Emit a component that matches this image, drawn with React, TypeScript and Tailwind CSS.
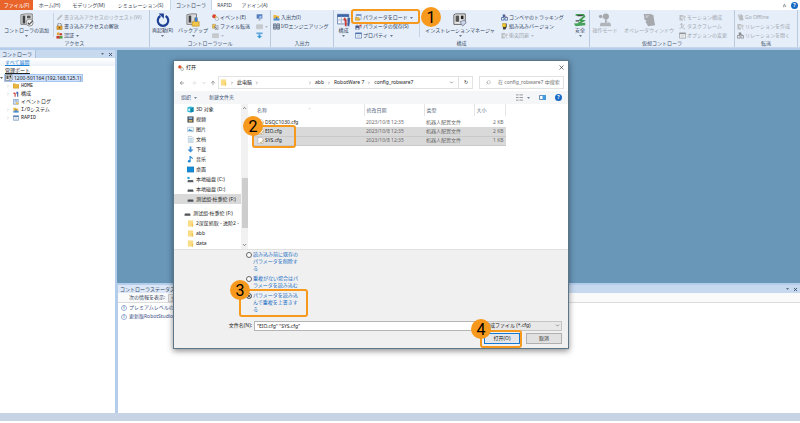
import { FC, ReactNode } from 'react';
import {
  FiArrowLeft,
  FiArrowRight,
  FiArrowUp,
  FiChevronDown,
  FiChevronRight,
  FiChevronsUp,
  FiChevronUp,
  FiSearch,
  FiX,
} from 'react-icons/fi';

type IconName =
  | 'cabinet' | 'restart' | 'backup' | 'config' | 'manager' | 'safety' | 'joystick' | 'operator'
  | 'pencil' | 'lock' | 'people' | 'event' | 'transfer' | 'screen' | 'box' | 'down' | 'io' | 'eng'
  | 'load' | 'save' | 'list' | 'track' | 'embed' | 'robot' | 'axes';

const Icon: FC<{ name: IconName; className?: string }> = ({ name, className = 'w-[7px] h-[7px]' }) => (
  <svg viewBox="0 0 16 16" className={`shrink-0 ${className}`} fill="none" aria-hidden="true">
    {name === 'cabinet' && (
      <>
        <path d="M1 2l5-1h8v9l-4 3H1z" fill="#d9dadb" stroke="#777" />
        <path d="M3 3h3v9H3z" fill="#3f4245" />
        <path d="M8 3h4v3H8z" fill="#555" />
        <circle cx="11" cy="11" r="4" fill="#eee" stroke="#888" />
        <path d="M9 11l1.5 2 4-4" stroke="#555" strokeWidth="1.5" />
      </>
    )}
    {name === 'restart' && (
      <>
        <path d="M5 3.500A6 6 0 1 0 11 3.500" stroke="#1c3f93" strokeWidth="2.5" />
        <path d="M3 .5h6v6z" fill="#1c3f93" />
      </>
    )}
    {name === 'backup' && (
      <>
        <path d="M1 2l5-1h6v9l-3 3H1z" fill="#d9dadb" stroke="#777" />
        <path d="M3 3h3v8H3z" fill="#3f4245" />
        <path d="M7 10h2l1-4h3v4h2v5H7z" fill="#f3c64a" stroke="#b88a1a" strokeWidth=".7" />
        <path d="M10 5h3v5h-3z" fill="#3d7ad0" />
      </>
    )}
    {name === 'config' && (
      <>
        <path d="M.5 1.500h13v11H.5z" fill="#eef2f8" stroke="#6b83ab" />
        <path d="M.5 1.500h13v3H.5z" fill="#3c64a8" />
        <path d="M1 8h12M5 4v8M9 4v8" stroke="#a9b8d0" />
        <path d="M7 7l2-2 2 3v7H9V9z" fill="#cb3b35" />
        <path d="M12 5l3 1-1 9h-2z" fill="#3f5e9c" />
      </>
    )}
    {name === 'manager' && (
      <>
        <path d="M1 2l2-1h11v11l-2 1H1z" fill="#e8e8e8" stroke="#555" />
        <path d="M3 3h4v7H3z" fill="#555" />
        <path d="M9 3h3v4H9z" fill="#222" />
        <path d="M8 10l5-2 2 3-4 4z" fill="#c9d3e5" stroke="#7c8799" />
      </>
    )}
    {name === 'safety' && (
      <>
        <path d="M3 2h9l1 2-5 4 4 1-6 3" stroke="#3f9c52" strokeWidth="2" />
        <path d="M5 3h6M3 9h4" stroke="#444" strokeWidth="1.3" />
        <path d="M1 12l13-1v3L3 15z" fill="#47a35c" />
      </>
    )}
    {name === 'joystick' && (
      <>
        <circle cx="9" cy="4" r="3.5" fill="#a5a9ae" />
        <circle cx="3" cy="4" r="2" fill="#a5a9ae" />
        <path d="M8 6h2v5H8z" fill="#a5a9ae" />
        <path d="M3 11h11l1 4H2z" fill="#b0b4b9" />
        <path d="M5 5l8 6" stroke="#c8ccd1" />
      </>
    )}
    {name === 'operator' && (
      <>
        <path d="M2 1h9l1 7H3z" fill="#a5a9ae" />
        <path d="M4 2.500h5v3H4z" fill="#c3c7cb" />
        <path d="M8 3l5-1 1 7 1 5-8 1-3-5z" fill="#a5a9ae" />
      </>
    )}
    {name === 'pencil' && <path d="M2 14l1-4 9-9 3 3-9 9z" fill="#a9adb3" />}
    {name === 'lock' && (
      <>
        <path d="M4 8V4a4 4 0 0 1 8 0v4" stroke="#777" strokeWidth="2" />
        <path d="M2 7h12v8H2z" fill="#eba92f" stroke="#9a6a16" />
        <path d="M6 9h4v4H6z" fill="#8a5a14" />
      </>
    )}
    {name === 'people' && (
      <>
        <circle cx="5" cy="4" r="3.5" fill="#e3a63c" />
        <circle cx="11" cy="5" r="3" fill="#cf4433" />
        <path d="M1 9h8v6H1z" fill="#c93a2b" />
        <path d="M8 9h7v6H8z" fill="#5da043" />
      </>
    )}
    {name === 'event' && (
      <>
        <circle cx="5" cy="5" r="4.5" fill="#d9452f" />
        <path d="M7 4l6 3-5 6z" fill="#f3bf33" />
        <circle cx="11" cy="11" r="4" fill="#eee" stroke="#7a8596" />
      </>
    )}
    {name === 'transfer' && (
      <>
        <path d="M1 3h7v9H1z" fill="#f2c85b" stroke="#a87f28" />
        <path d="M7 6h7v9H7z" fill="#d4d9e2" stroke="#6c7788" />
        <path d="M4 8l8 5" stroke="#555" strokeWidth="1.5" />
      </>
    )}
    {name === 'screen' && (
      <>
        <path d="M2 1h12v9H2z" fill="#4f80c8" stroke="#6c7ca0" />
        <path d="M6 10h4v5H6z" fill="#9aa8c0" />
        <circle cx="10" cy="7" r="3" fill="#9dc0ee" />
      </>
    )}
    {name === 'box' && <path d="M1 4h14v9H1z" fill="#b7bbc1" stroke="#9da2a9" />}
    {name === 'down' && (
      <>
        <path d="M1 1h14v4H1z" fill="#67a8dc" />
        <path d="M6 5h4v4h4l-6 6-6-6h4z" fill="#3f9ad8" />
      </>
    )}
    {name === 'io' && (
      <>
        <path d="M1 2h6l1 2h6v6H1z" fill="#efb93c" />
        <path d="M1 10h14v5H1z" fill="#4f8fcf" />
        <path d="M6 6l5 2-4 4z" fill="#3b6aad" />
      </>
    )}
    {name === 'eng' && (
      <>
        <path d="M1 2h6v12H1zM9 2h6v12H9z" stroke="#44556e" strokeWidth="1.5" />
        <path d="M0 6h16M0 10h16M4 2v12M12 2v12" stroke="#44556e" />
      </>
    )}
    {name === 'load' && (
      <>
        <path d="M3 1h11v11H3z" fill="#eef3fb" stroke="#5878ae" />
        <path d="M3 1h11v3H3z" fill="#5c82c0" />
        <path d="M1 8h8l2 6H1z" fill="#f0bd48" stroke="#a97d20" />
      </>
    )}
    {name === 'save' && (
      <>
        <path d="M5 1h10v10H5z" fill="#eef3fb" stroke="#5878ae" />
        <path d="M1 6h9v9H1z" fill="#3d4f82" />
        <path d="M3 11h5v4H3z" fill="#dfe5f1" />
        <path d="M10 4h4v4h-4z" fill="#c93a2b" />
      </>
    )}
    {name === 'list' && (
      <>
        <path d="M1 2h14v12H1z" fill="#f6f9fd" stroke="#4f74ae" strokeWidth="1.5" />
        <path d="M1 2h14v3H1z" fill="#4f74ae" />
        <path d="M4 8h8M4 11h8" stroke="#8ea4c6" />
      </>
    )}
    {name === 'track' && (
      <>
        <path d="M4 1h5v6H4z" fill="#44639c" />
        <path d="M1 8h6v6H1zM9 8h6v6H9z" stroke="#44639c" strokeWidth="1.8" />
        <path d="M8 3l5 4" stroke="#8a4a60" strokeWidth="2" />
      </>
    )}
    {name === 'embed' && (
      <>
        <path d="M3 1h10v8l-3 6H5z" fill="#3f3f3c" />
        <path d="M3 1h8v8H3z" fill="#f0c42d" />
      </>
    )}
    {name === 'robot' && (
      <>
        <path d="M1 2h8v4H5v4h4v5H1z" fill="#a9aeb5" />
        <path d="M8 5h6v3h-4l4 7" stroke="#a9aeb5" strokeWidth="2" />
      </>
    )}
    {name === 'axes' && (
      <path d="M6 1v9l-5 3M6 10l8 4M2 4l4-3 3 3M12 4l-5 6" stroke="#9ca2aa" strokeWidth="2" />
    )}
  </svg>
);

const Caret: FC<{ className?: string }> = ({ className = '' }) => (
  <svg viewBox="0 0 6 4" className={`w-[3px] h-[2px] shrink-0 opacity-70 ${className}`} aria-hidden="true">
    <path d="M0 0h6L3 4z" fill="currentColor" />
  </svg>
);

interface BigButtonProps {
  icon: IconName;
  label: string;
  className: string;
  disabled?: boolean;
  caret?: boolean;
}

const BigButton: FC<BigButtonProps> = ({ icon, label, className, disabled, caret = true }) => (
  <button
    disabled={disabled}
    className={`flex flex-col items-center shrink-0 whitespace-nowrap disabled:text-[#a3a8b0] ${className}`}
  >
    <Icon name={icon} className="w-[14px] h-[14px]" />
    <span className="leading-[7px]">{label}</span>
    {caret && <Caret className="mt-[1px]" />}
  </button>
);

interface SmallButton {
  icon: IconName;
  label?: string;
  disabled?: boolean;
  caret?: boolean;
}

const SmallColumn: FC<{ items: SmallButton[]; className: string }> = ({ items, className }) => (
  <div className={`flex flex-col shrink-0 ${className}`}>
    {items.map(({ icon, label, disabled, caret }) => (
      <button
        key={icon + label}
        disabled={disabled}
        aria-label={label ?? icon}
        className="flex items-center gap-[1px] h-[9px] whitespace-nowrap disabled:text-[#a3a8b0]"
      >
        <Icon name={icon} className={`w-[7px] h-[7px] ${disabled ? 'grayscale opacity-70' : ''}`} />
        {label}
        {caret && <Caret className="ml-[1px]" />}
      </button>
    ))}
  </div>
);

const Group: FC<{ title: string; className: string; children: ReactNode }> = ({ title, className, children }) => (
  <section className={`flex flex-col shrink-0 border-r border-[#b9c9de] ${className}`}>
    <div className="flex h-[30px] pt-[3px]">{children}</div>
    <h2 className="text-center leading-[7px] text-[#44546c]">{title}</h2>
  </section>
);

const Divider = () => <div className="w-px h-[24px] bg-[#c6d3e4] shrink-0" />;

const Ribbon = () => (
  <div className="flex h-[38px] bg-[#e5eef9] border-b border-[#c5d6ea] overflow-hidden">
    <Group title="アクセス" className="w-[150px]">
      <BigButton icon="cabinet" label="コントローラの追加" className="w-[53px]" />
      <Divider />
      <SmallColumn
        className="pl-[2px]"
        items={[
          { icon: 'pencil', label: '書き込みアクセスのリクエスト(W)', disabled: true },
          { icon: 'lock', label: '書き込みアクセスの解放' },
          { icon: 'people', label: '認証', caret: true },
        ]}
      />
    </Group>
    <Group title="コントローラツール" className="w-[121px]">
      <BigButton icon="restart" label="再起動(R)" className="w-[25px]" />
      <BigButton icon="backup" label="バックアップ" className="w-[36px]" />
      <SmallColumn
        className="w-[45px] pl-[1px]"
        items={[
          { icon: 'event', label: 'イベント(E)' },
          { icon: 'transfer', label: 'ファイル転送' },
          { icon: 'box', caret: true, disabled: true },
        ]}
      />
      <SmallColumn
        className=""
        items={[{ icon: 'screen' }, { icon: 'box', caret: true, disabled: true }, { icon: 'down' }]}
      />
    </Group>
    <Group title="入出力" className="w-[63px]">
      <SmallColumn
        className="pl-[2px]"
        items={[
          { icon: 'io', label: '入出力(I)' },
          { icon: 'eng', label: 'I/Oエンジニアリング' },
        ]}
      />
    </Group>
    <Group title="構成" className="w-[256px]">
      <BigButton icon="config" label="構成" className="w-[19px]" />
      <SmallColumn
        className="w-[66px] pl-[2px]"
        items={[
          { icon: 'load', label: 'パラメータをロード', caret: true },
          { icon: 'save', label: 'パラメータの保存(S)' },
          { icon: 'list', label: 'プロパティ', caret: true },
        ]}
      />
      <Divider />
      <BigButton icon="manager" label="インストレーションマネージャ" className="w-[80px]" />
      <SmallColumn
        className="w-[73px] pl-[1px]"
        items={[
          { icon: 'track', label: 'コンベヤのトラッキング' },
          { icon: 'embed', label: '組み込みバージョン' },
          { icon: 'robot', label: '衝突回避', caret: true, disabled: true },
        ]}
      />
      <BigButton icon="safety" label="安全" className="w-[14px]" />
    </Group>
    <Group title="仮想コントローラ" className="w-[145px]">
      <BigButton icon="joystick" label="操作モード" className="w-[30px]" disabled caret={false} />
      <BigButton icon="operator" label="オペレータウィンドウ" className="w-[58px]" disabled caret={false} />
      <SmallColumn
        className="pl-[1px]"
        items={[
          { icon: 'robot', label: 'モーション構成', disabled: true },
          { icon: 'axes', label: 'タスクフレーム', disabled: true },
          { icon: 'list', label: 'オプションの変更', disabled: true },
        ]}
      />
    </Group>
    <Group title="転送" className="w-[63px]">
      <SmallColumn
        className="pl-[2px]"
        items={[
          { icon: 'operator', label: 'Go Offline', disabled: true },
          { icon: 'robot', label: 'リレーションを作成', disabled: true },
          { icon: 'track', label: 'リレーションを開く', disabled: true },
        ]}
      />
    </Group>
  </div>
);

const HelpBadge = () => (
  <button className="flex items-center justify-center w-[7px] h-[7px] rounded-full bg-[#1769c4] text-white font-bold leading-[7px]">
    ?
  </button>
);

const MenuTabs = () => (
  <nav className="flex h-[10px] bg-white text-[#3c4654] whitespace-nowrap">
    <button className="w-[33px] bg-[#e8642b] text-white">ファイル(F)</button>
    <button className="w-[33px]">ホーム(H)</button>
    <button className="w-[45px]">モデリング(M)</button>
    <button className="w-[59px]">シミュレーション(S)</button>
    <button className="w-[42px] bg-[#e5eef9] border-x border-[#c5d6ea]">コントローラ</button>
    <button className="w-[25px]">RAPID</button>
    <button className="w-[35px]">アドイン(A)</button>
    <div className="flex items-center gap-[4px] ml-auto pr-[2px]">
      <FiChevronsUp className="w-[5px] h-[5px]" strokeWidth={3} />
      <HelpBadge />
    </div>
  </nav>
);

const PanelHeader: FC<{ title: string }> = ({ title }) => (
  <div className="flex items-center h-[8px] bg-[#c7d9ef] text-[#33465f] whitespace-nowrap">
    <h2 className="h-full leading-[8px] pl-[2px] pr-[3px] bg-[#dbe7f6] border-r border-[#a9bfdd]">{title}</h2>
    <Caret className="ml-auto mr-[4px]" />
    <FiX className="w-[5px] h-[5px] mr-[2px]" strokeWidth={4} />
  </div>
);

const TREE = [
  { label: 'HOME', kind: 'folder', open: true },
  { label: '構成', kind: 'tools', open: true },
  { label: 'イベントログ', kind: 'log', open: false },
  { label: 'I/Oシステム', kind: 'io', open: true },
  { label: 'RAPID', kind: 'rapid', open: true },
];

const TreeIcon: FC<{ kind: string }> = ({ kind }) => {
  if (kind === 'io') return <Icon name="io" className="w-[6px] h-[6px]" />;
  if (kind === 'rapid') return <Icon name="list" className="w-[6px] h-[6px]" />;
  return (
    <svg viewBox="0 0 16 16" className="w-[6px] h-[6px] shrink-0" fill="none" aria-hidden="true">
      {kind === 'folder' && <path d="M0 2h6l2 2h8v10H0z" fill="#e8b73c" stroke="#b98a1e" />}
      {kind === 'tools' && (
        <>
          <path d="M2 3l5 2v10H4V8L1 7z" fill="#d03c35" />
          <path d="M9 2h5v13h-3V8L9 7z" fill="#4166ac" />
        </>
      )}
      {kind === 'log' && (
        <>
          <path d="M1 1h13v13H1z" fill="#cfe0f5" stroke="#6080b4" strokeWidth="1.5" />
          <path d="M5 4h6M5 7h6" stroke="#6080b4" />
          <path d="M8 9h6v5H8z" fill="#f0c14c" />
        </>
      )}
    </svg>
  );
};

const ControllerPanel = () => (
  <aside className="flex flex-col w-[117px] shrink-0 bg-white border-r-2 border-[#b4cdeb]">
    <PanelHeader title="コントローラ" />
    <div className="flex h-[8px] pl-[5px] bg-linear-to-b from-white to-[#edf2f8]">
      <a href="#expand" className="leading-[8px] text-[#1b80d3] underline">すべて展開</a>
    </div>
    <ul className="leading-[8px] text-[#222] whitespace-nowrap">
      <li className="pl-[5px] underline">管理ポート</li>
      <li className="flex items-center">
        <span className="w-[4px] flex"><Caret /></span>
        <span className="flex items-center h-[8px] pr-[1px] bg-[#d0e1fb] border border-[#a8c6f2]">
          <Icon name="manager" className="w-[8px] h-[8px]" />
          <span className="pl-[1px]">1200-501164 (192.168.125.1)</span>
        </span>
      </li>
      {TREE.map(({ label, kind, open }) => (
        <li key={label} className="flex items-center pl-[6px] font-[Liberation_Mono,Noto_Sans_CJK_JP,monospace]">
          <span className="w-[7px] text-[#999]">{open && <FiChevronRight className="w-[4px] h-[4px]" />}</span>
          <TreeIcon kind={kind} />
          <span className="pl-[2px]">{label}</span>
        </li>
      ))}
    </ul>
  </aside>
);

const StatusPanel = () => (
  <section className="flex flex-col h-[130px] bg-white border-t-2 border-l border-[#b4cdeb]">
    <PanelHeader title="コントローラステータス" />
    <div className="flex items-center h-[10px] pl-[11px] gap-[3px] border-b border-[#dcdcdc] bg-[#fafafa]">
      <label htmlFor="filter">次の情報を表示:</label>
      <select id="filter" className="appearance-none w-[60px] h-[8px] px-[2px] border border-[#ccc] bg-[#eee]">
        <option>全情報</option>
      </select>
    </div>
    <ul className="pl-[3px] text-[#3c4f86] whitespace-nowrap">
      {['プレミアムレベルの', '更新版RobotStudio'].map((text) => (
        <li key={text} className="flex items-center gap-[2px] h-[9px]">
          <span className="flex items-center justify-center w-[6px] h-[6px] rounded-full border border-[#9db3d8] leading-[5px]">
            i
          </span>
          {text}
        </li>
      ))}
    </ul>
  </section>
);

const PLACES = [
  { label: '3D 对象', kind: 'cube' },
  { label: '视频', kind: 'video' },
  { label: '图片', kind: 'picture' },
  { label: '文档', kind: 'doc' },
  { label: '下载', kind: 'download' },
  { label: '音乐', kind: 'music' },
  { label: '桌面', kind: 'desktop' },
  { label: '本地磁盘 (C:)', kind: 'system' },
  { label: '本地磁盘 (D:)', kind: 'drive' },
  { label: '测试组-杜秉伦 (F:)', kind: 'drive' },
];

const PlaceIcon: FC<{ kind: string }> = ({ kind }) => (
  <svg viewBox="0 0 16 16" className="w-[7px] h-[7px] shrink-0" fill="none" aria-hidden="true">
    {kind === 'cube' && (
      <>
        <path d="M1 3l7-2 7 2v10l-7 2-7-2z" fill="#35b5d6" />
        <path d="M8 6l7-3v10l-7 2z" fill="#1585a8" />
        <path d="M3 6h4v5H3z" fill="#d6f3fa" />
      </>
    )}
    {kind === 'video' && (
      <>
        <path d="M1 1h14v14H1z" fill="#4a5058" />
        <path d="M4 3h8v4H4z" fill="#83b5e6" />
        <path d="M4 9h8v4H4z" fill="#d0b869" />
      </>
    )}
    {kind === 'picture' && (
      <>
        <path d="M1 3h14v10H1z" fill="#e9f5fd" stroke="#8fa9be" />
        <path d="M2 11l4-4 3 3 2-1 3 3z" fill="#2f84c7" />
      </>
    )}
    {kind === 'doc' && (
      <>
        <path d="M3 1h8l3 3v11H3z" fill="#f5f9fc" stroke="#8ca5b8" />
        <path d="M5 6h7M5 9h7M5 12h7" stroke="#5f9cc9" />
      </>
    )}
    {kind === 'download' && <path d="M6 1h4v7h5l-7 7-7-7h5z" fill="#3c8fd6" />}
    {kind === 'music' && (
      <>
        <path d="M7 12V1l6 5" stroke="#1f86d2" strokeWidth="2.5" />
        <circle cx="5" cy="12" r="3" fill="#1f86d2" />
      </>
    )}
    {kind === 'desktop' && <path d="M0 2h16v12H0z" fill="#158bd6" stroke="#0b6cae" />}
    {kind === 'system' && (
      <>
        <path d="M1 2h5v5H1z" fill="#26a3e2" />
        <path d="M2 9h12l1 5H1z" fill="#5c6268" />
      </>
    )}
    {kind === 'drive' && <path d="M2 8h12l1 5H1z" fill="#4e5358" />}
    {kind === 'folder' && (
      <>
        <path d="M2 1h12v14H2z" fill="#f9dc83" />
        <path d="M11 8h3v7h-3z" fill="#eec457" />
      </>
    )}
  </svg>
);

const PlacesPane = () => (
  <nav className="flex w-[74px] shrink-0 whitespace-nowrap">
    <ul className="w-[67px] overflow-hidden">
      {PLACES.map(({ label, kind }, i) => (
        <li key={label} className={`flex items-center h-[10px] pl-[13px] gap-[2px] ${i === 9 ? 'bg-[#d9d9d9]' : ''}`}>
          <PlaceIcon kind={kind} />
          {label}
        </li>
      ))}
      <li className="flex items-center h-[10px] mt-[4px] pl-[10px] gap-[2px]">
        <PlaceIcon kind="drive" />
        测试组-杜秉伦 (F:)
      </li>
      {['2深筐抓取 - 进阶2 -', 'abb', 'data'].map((label) => (
        <li key={label} className="flex items-center h-[10px] pl-[13px] gap-[2px]">
          <PlaceIcon kind="folder" />
          {label}
        </li>
      ))}
    </ul>
    <div className="flex flex-col items-center w-[7px] bg-[#f1f1f1] text-[#444]">
      <FiChevronUp className="w-[5px] h-[8px]" strokeWidth={3} />
      <div className="w-[6px] h-[50px] mt-auto bg-[#cdcdcd]" />
      <FiChevronDown className="w-[5px] h-[8px] mt-[13px]" strokeWidth={3} />
    </div>
  </nav>
);

const FILES = [
  { name: 'DSQC1030.cfg', size: '2 KB', selected: false },
  { name: 'EIO.cfg', size: '2 KB', selected: true },
  { name: 'SYS.cfg', size: '1 KB', selected: true },
];

const FileList = () => (
  <div className="flex-1 pl-[6px]">
    <table className="table-fixed w-[252px] text-left whitespace-nowrap text-[#6b6b6b]">
      <thead className="text-[#56677d]">
        <tr className="h-[12px]">
          <th className="w-[110px] font-normal pl-[3px] border-r border-[#e5e5e5]">
            <div className="flex items-start h-[7px]">
              名称
              <FiChevronUp className="w-[5px] h-[3px] ml-[40px]" />
            </div>
          </th>
          <th className="w-[60px] font-normal pl-[2px] border-r border-[#e5e5e5]">修改日期</th>
          <th className="w-[50px] font-normal pl-[2px] border-r border-[#e5e5e5]">类型</th>
          <th className="font-normal pl-[2px] border-r border-[#e5e5e5]">大小</th>
        </tr>
      </thead>
      <tbody>
        <tr className="h-[2px]" />
        {FILES.map(({ name, size, selected }) => (
          <tr key={name} className={`h-[9px] ${selected ? 'bg-[#d9d9d9] border-b border-[#c9c9c9]' : ''}`}>
            <td className="pl-[3px] text-[#222]">
              <div className="flex items-center gap-[1px]">
                <svg viewBox="0 0 16 16" className="w-[7px] h-[7px]" aria-hidden="true">
                  <path d="M2 1h8l4 4v10H2z" fill="#fff" stroke="#999" />
                  <path d="M6 11l3 3 6-8" fill="none" stroke="#c8a45a" strokeWidth="2" />
                </svg>
                {name}
              </div>
            </td>
            <td className="pl-[2px]">2023/10/8 12:35</td>
            <td className="pl-[2px]">机器人配置文件</td>
            <td className="pr-[2px] text-right">{size}</td>
          </tr>
        ))}
      </tbody>
    </table>
  </div>
);

const MODES = [
  '読み込み前に既存のパラメータを削除する',
  '重複がない場合はパラメータを読み込む',
  'パラメータを読み込んで重複を上書きする',
];

const Crumb: FC<{ children?: ReactNode; className?: string }> = ({ children, className = '' }) => (
  <span className={`flex items-center ${className}`}>
    {children}
    <FiChevronRight className="w-[4px] h-[4px] mx-[3px]" />
  </span>
);

const OpenDialog = () => (
  <div
    role="dialog"
    aria-label="打开"
    className="absolute left-[173px] top-[60px] w-[396px] bg-white border border-[#5c7688] shadow-[0_2px_6px_rgba(0,0,0,0.45)] text-[#222] font-[Noto_Sans,Noto_Sans_CJK_SC,sans-serif]"
  >
    <div className="flex items-center h-[13px] pl-[4px] pr-[3px]">
      <Icon name="event" className="w-[6px] h-[6px]" />
      <h1 className="pl-[2px]">打开</h1>
      <button aria-label="close" className="ml-auto"><FiX className="w-[7px] h-[7px]" /></button>
    </div>

    <div className="flex items-center h-[17px] pl-[5px] pr-[4px] whitespace-nowrap">
      <FiArrowLeft className="w-[6px] h-[6px] text-[#555]" />
      <FiArrowRight className="w-[6px] h-[6px] ml-[6px] text-[#ccc]" />
      <FiChevronDown className="w-[4px] h-[4px] ml-[5px] text-[#777]" />
      <FiArrowUp className="w-[6px] h-[6px] ml-[4px] mr-[2px] text-[#555]" />
      <div className="flex items-center w-[255px] h-[13px] pl-[1px] border border-[#e2e2e2]">
        <PlaceIcon kind="folder" />
        <Crumb />
        <Crumb className="w-[67px]">此电脑</Crumb>
        <Crumb className="pl-[1px]" />
        <Crumb>abb</Crumb>
        <Crumb>RobotWare 7</Crumb>
        config_robware7
        <FiChevronDown className="w-[5px] h-[5px] ml-auto mr-[4px]" />
        <button aria-label="refresh" className="w-[14px] h-full border-l border-[#e2e2e2]">↻</button>
      </div>
      <div className="flex items-center flex-1 h-[13px] ml-[6px] pl-[6px] gap-[7px] border border-[#e2e2e2]">
        <FiSearch className="w-[5px] h-[5px] text-[#888] shrink-0 -scale-x-100" />
        <input
          aria-label="search"
          placeholder="在 config_robware7 中搜索"
          className="w-full min-w-0 placeholder:text-[#6e6e6e]"
        />
      </div>
    </div>

    <div className="flex items-center h-[13px] pl-[7px] pr-[6px] bg-[#f5f6f8] text-[#3d5577]">
      <button className="flex items-center gap-[3px]">组织 <Caret /></button>
      <button className="ml-[12px]">新建文件夹</button>
      <svg viewBox="0 0 8 8" className="w-[7px] h-[7px] ml-auto" aria-hidden="true">
        <path d="M0 1h3M0 4h3M0 7h3M4 1h4M4 4h4M4 7h4" stroke="#8a8f96" />
      </svg>
      <Caret className="ml-[4px]" />
      <svg viewBox="0 0 8 6" className="w-[7px] h-[5px] ml-[9px] mr-[9px]" aria-hidden="true">
        <path d="M.5.5h7v5h-7z" fill="#fff" stroke="#456f9d" />
        <path d="M4 0h4v6H4z" fill="#419be0" />
      </svg>
      <HelpBadge />
    </div>

    <div className="flex h-[145px]">
      <PlacesPane />
      <FileList />
    </div>

    <div className="bg-[#f0f0f0] pb-[4px] pr-[6px] border-t border-[#e0e0e0]">
      <fieldset className="flex flex-col gap-[3px] pt-[1px] pl-[72px] text-[#1a6fc4] font-[Noto_Sans,Noto_Sans_CJK_JP,sans-serif]">
        {MODES.map((mode, i) => (
          <label key={mode} className="flex gap-[1px] w-[53px] leading-[7px]">
            <input
              type="radio"
              name="mode"
              defaultChecked={i === 2}
              className="appearance-none w-[6px] h-[6px] mt-[1px] shrink-0 rounded-full border border-[#666] bg-white checked:bg-[#222] checked:shadow-[inset_0_0_0_1px_white]"
            />
            <span className="w-[46px] break-all">{mode}</span>
          </label>
        ))}
      </fieldset>
      <div className="flex items-center h-[11px] mt-[7px] whitespace-nowrap">
        <label htmlFor="filename" className="w-[78px] text-right">文件名(N):</label>
        <input
          id="filename"
          defaultValue={'"EIO.cfg" "SYS.cfg"'}
          className="flex-1 min-w-0 h-[10px] ml-[2px] px-[2px] bg-white border border-[#b5b5b5]"
        />
        <div className="grid items-center w-[80px] ml-[4px]">
          <select aria-label="type" className="col-start-1 row-start-1 appearance-none h-[10px] pl-[2px] bg-[#e8e8e8] border border-[#c4c4c4]">
            <option>構成ファイル (*.cfg)</option>
          </select>
          <FiChevronDown className="col-start-1 row-start-1 justify-self-end w-[5px] h-[5px] mr-[2px] pointer-events-none" />
        </div>
      </div>
      <div className="flex justify-end gap-[6px] mt-[2px]">
        <button className="w-[36px] h-[11px] bg-[#e3e6ea] border border-[#1379d2]">打开(O)</button>
        <button className="w-[36px] h-[11px] bg-[#e1e1e1] border border-[#b0b0b0]">取消</button>
      </div>
    </div>
  </div>
);

const CALLOUTS = [
  { step: 1, box: 'left-[351px] top-[9px] w-[69px] h-[15px]', dot: 'left-[421px] top-[7px]' },
  { step: 2, box: 'left-[252px] top-[125px] w-[44px] h-[23px]', dot: 'left-[243px] top-[116px]' },
  { step: 3, box: 'left-[239px] top-[289px] w-[69px] h-[28px]', dot: 'left-[230px] top-[280px]' },
  { step: 4, box: 'left-[480px] top-[330px] w-[42px] h-[18px]', dot: 'left-[471px] top-[319px]' },
];

export default function App() {
  return (
    <div className="relative flex flex-col min-h-screen bg-[#b4cdeb] text-[5px] leading-[7px] text-[#34445c] font-[Noto_Sans,Noto_Sans_CJK_JP,sans-serif]">
      <MenuTabs />
      <Ribbon />
      <div className="flex flex-1 pt-[2px]">
        <ControllerPanel />
        <main className="flex flex-col flex-1 min-w-0 bg-[#6997b8]">
          <div className="flex-1" />
          <StatusPanel />
        </main>
      </div>
      <footer className="h-[10px] bg-[#c6d4e6] border-b-2 border-white" />

      <OpenDialog />

      {CALLOUTS.map(({ step, box, dot }) => (
        <div key={step}>
          <div className={`absolute border-2 border-[#f6991c] rounded-[3px] pointer-events-none ${box}`} />
          <div
            className={`absolute flex items-center justify-center w-[20px] h-[20px] rounded-full bg-[#f6991c] text-black text-[16px] font-[Roboto,sans-serif] ${dot}`}
          >
            {step}
          </div>
        </div>
      ))}
    </div>
  );
}
